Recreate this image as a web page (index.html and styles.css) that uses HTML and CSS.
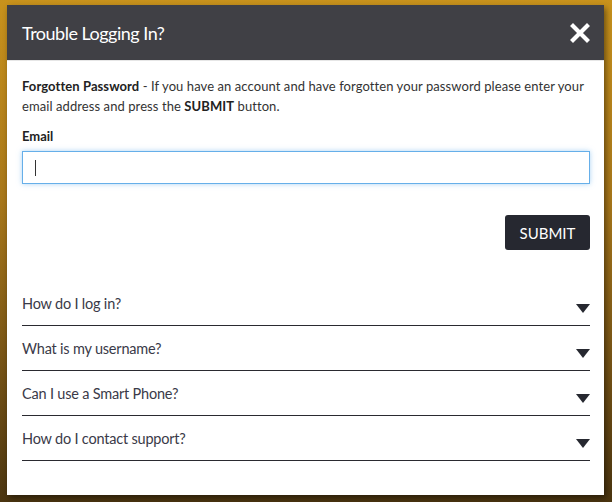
FILE: index.html
```html
<!DOCTYPE html>
<html>
<head>
<meta charset="utf-8">
<link rel="stylesheet" href="styles.css">
</head>
<body>
<div class="modal">
  <div class="modal-header">
    <h1 class="title">Trouble Logging In?</h1>
    <span class="close">
      <svg width="20" height="20" viewBox="0 0 20 20"><path d="M3 3 L17 17 M17 3 L3 17" stroke="#fff" stroke-width="4.2" stroke-linecap="square"/></svg>
    </span>
  </div>
  <div class="modal-body">
    <p class="intro"><b>Forgotten Password</b> - If you have an account and have forgotten your password please enter your email address and press the <b>SUBMIT</b> button.</p>
    <label class="label">Email</label>
    <div class="input"><span class="caret"></span></div>
    <div class="actions"><button class="submit">SUBMIT</button></div>
    <ul class="faq">
      <li class="faq-item"><span>How do I log in?</span><span class="arrow"></span></li>
      <li class="faq-item"><span>What is my username?</span><span class="arrow"></span></li>
      <li class="faq-item"><span>Can I use a Smart Phone?</span><span class="arrow"></span></li>
      <li class="faq-item"><span>How do I contact support?</span><span class="arrow"></span></li>
    </ul>
  </div>
</div>
</body>
</html>
```
FILE: styles.css
```css
html, body { margin: 0; padding: 0; height: 100%; }
body {
  background: linear-gradient(180deg, #c8921c 0%, #a8771a 40%, #7a5616 70%, #4b3510 100%);
  font-family: Lato, "Open Sans", sans-serif;
  color: #333;
  box-sizing: border-box;
  padding: 5px 8px 7px 7px;
  display: flex;
}
.modal {
  flex: 1;
  background: #fff;
  display: flex;
  flex-direction: column;
  box-shadow: 2px 3px 6px rgba(0,0,0,0.45);
}
.modal-header {
  background: #404045;
  height: 55px;
  display: flex;
  align-items: center;
  justify-content: space-between;
  padding: 0 14px 0 15px;
  border-bottom: 1px solid #e6e6e6;
}
.title {
  margin: 0;
  color: #fff;
  font-weight: 400;
  font-size: 18px;
  letter-spacing: -0.5px;
}
.close { display: flex; }
.modal-body { padding: 15px 14px 0 15px; }
.intro {
  margin: 0;
  font-size: 13px;
  line-height: 20px;
  letter-spacing: 0.08px;
  color: #333;
}
.intro b { color: #222; }
.label {
  display: block;
  font-weight: 700;
  font-size: 13px;
  margin-top: 12px;
  color: #222;
}
.input {
  margin-top: 7px;
  height: 31px;
  border: 1px solid #66afe9;
  box-shadow: 0 0 5px rgba(102,175,233,0.55);
  display: flex;
  align-items: center;
  padding-left: 12px;
}
.caret { width: 1px; height: 16px; background: #333; }
.actions { display: flex; justify-content: flex-end; margin-top: 31px; }
.submit {
  background: #262830;
  color: #fff;
  border: none;
  border-radius: 3px;
  font-family: Lato, sans-serif;
  font-size: 15px;
  width: 85px;
  height: 35px;
  padding: 0;
}
.faq { list-style: none; margin: 31px 0 0; padding: 0; }
.faq-item {
  height: 44px;
  border-bottom: 1px solid #2a2a30;
  display: flex;
  justify-content: space-between;
  align-items: center;
  font-size: 14.5px;
  letter-spacing: -0.2px;
  color: #3a3a48;
}
.arrow {
  width: 0; height: 0;
  border-left: 7px solid transparent;
  border-right: 7px solid transparent;
  border-top: 9px solid #262830;
  margin-top: 10px;
}
```
